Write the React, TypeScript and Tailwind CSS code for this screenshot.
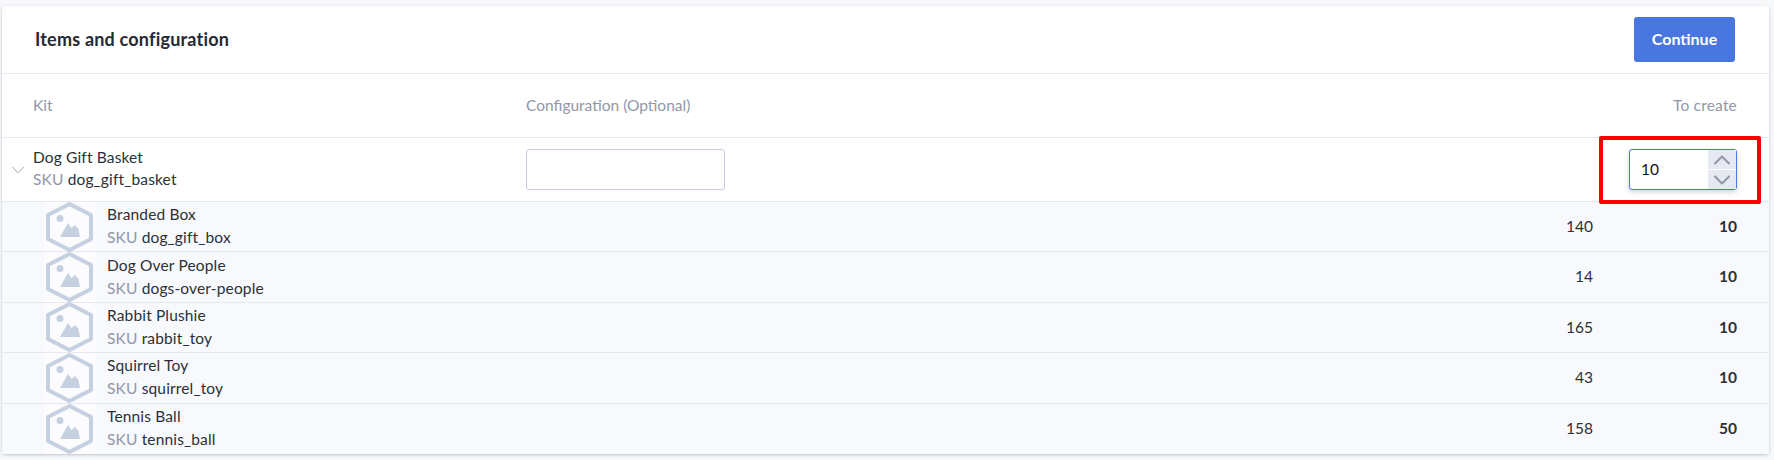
import { ChevronDown, ChevronUp } from "lucide-react";

type Item = {
  name: string;
  sku: string;
  stock: number;
  toCreate: number;
};

const items: Item[] = [
  { name: "Branded Box", sku: "dog_gift_box", stock: 140, toCreate: 10 },
  { name: "Dog Over People", sku: "dogs-over-people", stock: 14, toCreate: 10 },
  { name: "Rabbit Plushie", sku: "rabbit_toy", stock: 165, toCreate: 10 },
  { name: "Squirrel Toy", sku: "squirrel_toy", stock: 43, toCreate: 10 },
  { name: "Tennis Ball", sku: "tennis_ball", stock: 158, toCreate: 50 },
];

function PlaceholderImage() {
  return (
    <svg width="52" height="50" viewBox="0 0 52 50" fill="none">
      <path d="M25.5 2 L47 13 V37 L25.5 48 L4 37 V13 Z" stroke="#c5d0e0" strokeWidth="4" strokeLinejoin="round" />
      <circle cx="16" cy="16.5" r="3.5" fill="#c5d0e0" />
      <path d="M16 35 L24 21 L27.5 26 L31 23 L34.5 27 L36 35 Z" fill="#c5d0e0" />
    </svg>
  );
}

export default function App() {
  return (
    <div className="h-[460px] bg-[#f7f8fa] pt-[6px] pl-[2px] pr-[5px] font-['Lato',sans-serif] text-[15.5px] text-[#2b3038]">
      <div className="rounded-[4px] bg-white shadow-[0_1px_3px_rgba(60,70,100,0.3)]">
        {/* Header */}
        <div className="flex h-[68px] items-center justify-between border-b border-[#e6e8f0] pl-[33px] pr-[34px]">
          <h2 className="text-[18px] font-bold tracking-[0.2px] text-[#252a33]">Items and configuration</h2>
          <button className="mt-[-1px] h-[45px] w-[101px] rounded-[3px] bg-[#4a76df] text-[16px] font-bold text-white">
            Continue
          </button>
        </div>

        {/* Column titles */}
        <div className="flex h-[64px] items-center border-b border-[#e6e8f0] pl-[31px] pr-[32px] text-[#8f97a8]">
          <span className="w-[493px]">Kit</span>
          <span>Configuration (Optional)</span>
          <span className="ml-auto tracking-[0.2px]">To create</span>
        </div>

        {/* Kit row */}
        <div className="relative flex h-[64px] items-center border-b border-[#e6e8f0] pr-[32px]">
          <ChevronDown className="ml-[5px] mr-[4px] h-[22px] w-[22px] shrink-0 text-[#8f97a8]" strokeWidth={1} />
          <div className="mt-[-3px] w-[493px] leading-[22px] tracking-[0.15px]">
            <div>Dog Gift Basket</div>
            <div>
              <span className="text-[#8f97a8]">SKU</span> dog_gift_basket
            </div>
          </div>
          <input className="h-[41px] w-[199px] rounded-[3px] border border-[#c3cde2] bg-white" />
          <div className="ml-auto flex h-[41px] w-[108px] items-center justify-between rounded-[3px] border border-[#4a76df] bg-white pl-[11px] shadow-[0_2px_5px_rgba(60,80,140,0.25)]">
            <span className="text-[#111]">10</span>
            <div className="flex flex-col gap-px">
              <div className="flex h-[19px] w-[28px] items-center justify-center overflow-hidden bg-[#e6e9f1]">
                <ChevronUp className="h-[28px] w-[28px] shrink-0 text-[#8f97a8]" strokeWidth={1.8} />
              </div>
              <div className="flex h-[19px] w-[28px] items-center justify-center overflow-hidden bg-[#e6e9f1]">
                <ChevronDown className="h-[28px] w-[28px] shrink-0 text-[#8f97a8]" strokeWidth={1.8} />
              </div>
            </div>
          </div>
          {/* annotation box */}
          <div className="absolute left-[1597px] top-[-2px] h-[68px] w-[162px] rounded-[2px] border-[4px] border-[#fe0000]" />
        </div>

        {/* Component rows */}
        {items.map((item) => (
          <div
            key={item.sku}
            className="flex h-[50.4px] items-center border-b border-[#e6e8f0] bg-[#f8f9fc] pr-[32px] last:border-b-0"
          >
            <div className="ml-[42px] mr-[11px] flex h-full w-[52px] items-center bg-[#fcfcfe]">
              <PlaceholderImage />
            </div>
            <div className="mt-[-1px] leading-[23px] tracking-[0.15px]">
              <div>{item.name}</div>
              <div>
                <span className="text-[#8f97a8]">SKU</span> {item.sku}
              </div>
            </div>
            <span className="ml-auto">{item.stock}</span>
            <span className="w-[144px] text-right font-bold">{item.toCreate}</span>
          </div>
        ))}
      </div>
    </div>
  );
}
